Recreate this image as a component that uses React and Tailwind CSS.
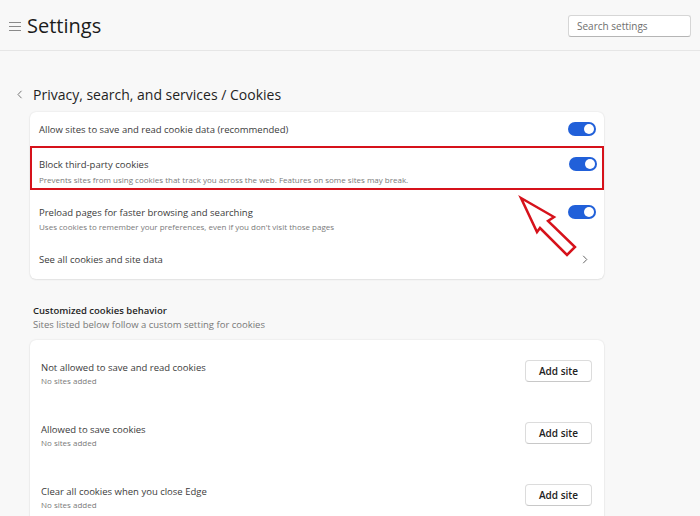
const font = { fontFamily: '"Open Sans", "Noto Sans", sans-serif' }

function Toggle() {
  return (
    <div className="w-[28px] h-[14px] rounded-full bg-[#2160d9] flex items-center justify-end pr-[2px] shrink-0">
      <div className="w-[10px] h-[10px] rounded-full bg-white" />
    </div>
  )
}

function SiteRow({ title }) {
  return (
    <div className="h-[62px] flex items-start justify-between pt-[20px] pl-[11px] pr-[12px]">
      <div className="pt-[1px]">
        <p className="text-[9.5px] leading-[14px] text-[#3b3b3b]">{title}</p>
        <p className="text-[8px] leading-[12px] text-[#7a7a7a]">No sites added</p>
      </div>
      <button className="w-[67px] h-[22px] rounded-[4px] border border-[#dcdcdc] border-b-[#c8c8c8] bg-white text-[10px] font-semibold text-[#222]">
        Add site
      </button>
    </div>
  )
}

export default function App() {
  return (
    <div className="relative h-[516px] w-[700px] overflow-hidden bg-[#f8f8f8]" style={font}>
      {/* Header */}
      <div className="h-[51px] border-b border-[#e6e6e6] flex items-center justify-between pl-[9px] pr-[9px]">
        <div className="flex items-center mt-[2px]">
          <svg width="12" height="9" viewBox="0 0 12 9" className="mr-[6px]">
            <path d="M0 0.5H12M0 4.5H12M0 8.5H12" stroke="#8a8a8a" strokeWidth="1" />
          </svg>
          <h1 className="text-[20px] leading-[24px] text-[#1b1b1b]">Settings</h1>
        </div>
        <div className="w-[123px] h-[22px] mt-[2px] rounded-[3px] border border-[#d6d6d6] border-b-[#b5b5b5] bg-white flex items-center pl-[8px]">
          <span className="text-[10px] text-[#6e6e6e]">Search settings</span>
        </div>
      </div>

      {/* Breadcrumb */}
      <div className="mt-[33px] h-[20px] flex items-center pl-[17px]">
        <svg width="6" height="9" viewBox="0 0 6 9" className="mr-[10px]">
          <path d="M4.5 0.8L1 4.5L4.5 8.2" stroke="#777" strokeWidth="1" fill="none" />
        </svg>
        <h2 className="text-[14px] font-medium text-[#1f1f1f]">Privacy, search, and services / Cookies</h2>
      </div>

      {/* Main card */}
      <div className="ml-[30px] mt-[8px] w-[574px] h-[167px] bg-white rounded-[6px] shadow-[0_0_2px_rgba(0,0,0,0.12),0_1px_2px_rgba(0,0,0,0.06)]">
        <div className="h-[34px] flex items-center justify-between pl-[9px] pr-[8px]">
          <p className="pt-[3px] text-[9.5px] text-[#3b3b3b]">Allow sites to save and read cookie data (recommended)</p>
          <Toggle />
        </div>
        <div className="h-[44px] border-2 border-[#d6121b] flex items-start justify-between pl-[7px] pr-[5px] pt-[9px]">
          <div className="pt-[1px]">
            <p className="text-[9.5px] leading-[14px] text-[#3b3b3b]">Block third-party cookies</p>
            <p className="mt-[2px] text-[8px] leading-[12px] text-[#7a7a7a]">
              Prevents sites from using cookies that track you across the web. Features on some sites may break.
            </p>
          </div>
          <Toggle />
        </div>
        <div className="flex items-start justify-between pl-[9px] pr-[8px] pt-[15px] pb-[7px]">
          <div className="pt-[1px]">
            <p className="text-[9.5px] leading-[14px] text-[#3b3b3b]">Preload pages for faster browsing and searching</p>
            <p className="mt-[1px] text-[8px] leading-[12px] text-[#7a7a7a]">
              Uses cookies to remember your preferences, even if you don't visit those pages
            </p>
          </div>
          <Toggle />
        </div>
        <div className="h-[39px] flex items-center justify-between pl-[9px] pr-[16px]">
          <p className="pt-[2px] text-[9.5px] text-[#3b3b3b]">See all cookies and site data</p>
          <svg width="6" height="9" viewBox="0 0 6 9">
            <path d="M1.2 0.8L4.8 4.5L1.2 8.2" stroke="#666" strokeWidth="1" fill="none" />
          </svg>
        </div>
      </div>

      {/* Customized section */}
      <div className="ml-[33px] mt-[25px]">
        <p className="text-[9.5px] leading-[14px] font-semibold text-[#1f1f1f]">Customized cookies behavior</p>
        <p className="text-[9.5px] leading-[14px] text-[#777]">Sites listed below follow a custom setting for cookies</p>
      </div>

      <div className="ml-[30px] mt-[8px] w-[574px] bg-white rounded-[6px] shadow-[0_0_2px_rgba(0,0,0,0.12),0_1px_2px_rgba(0,0,0,0.06)]">
        <SiteRow title="Not allowed to save and read cookies" />
        <SiteRow title="Allowed to save cookies" />
        <SiteRow title="Clear all cookies when you close Edge" />
      </div>

      {/* Annotation arrow */}
      <svg className="absolute left-[515px] top-[193px]" width="66" height="68" viewBox="0 0 66 68">
        <polygon
          points="6,5 39,24 33,28 60,54 52,62 25,35 22,39"
          fill="white"
          stroke="#d6121b"
          strokeWidth="2.5"
          strokeLinejoin="miter"
        />
      </svg>
    </div>
  )
}
